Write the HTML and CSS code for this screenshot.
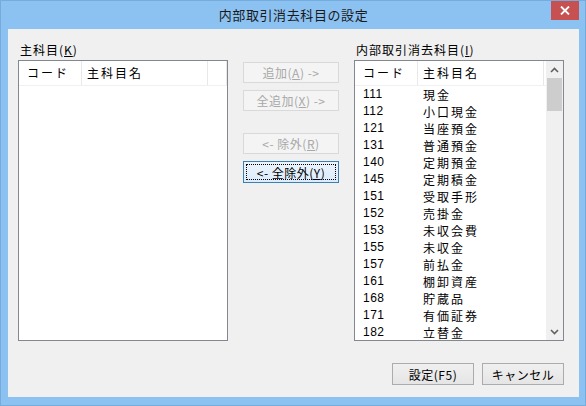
FILE: index.html
```html
<!DOCTYPE html>
<html lang="ja">
<head>
    <meta charset="UTF-8">
    <title>内部取引消去科目の設定</title>
    <link rel="stylesheet" href="styles.css">
</head>
<body>
    <div class="window">
        <div class="titlebar">
            <span></span>
            <div class="title">内部取引消去科目の設定</div>
            <div class="close">
                <svg width="10" height="9" viewBox="0 0 10 9"><path d="M1 0.5 L9 8.5 M9 0.5 L1 8.5" stroke="#fff" stroke-width="1.8"/></svg>
            </div>
        </div>

        <div class="client">
            <div class="panes">
                <div class="pane">
                    <div class="label">主科目(<u>K</u>)</div>
                    <div class="list">
                        <div class="head">
                            <div class="col-code">コード</div>
                            <div class="col-name">主科目名</div>
                            <div class="col-rest"></div>
                        </div>
                    </div>
                </div>

                <div class="moves">
                    <button class="btn disabled">追加(<u>A</u>) -&gt;</button>
                    <button class="btn disabled">全追加(<u>X</u>) -&gt;</button>
                    <button class="btn disabled gap">&lt;- 除外(<u>R</u>)</button>
                    <button class="btn focused"><span class="focus-ring">&lt;- 全除外(<u>Y</u>)</span></button>
                </div>

                <div class="pane">
                    <div class="label">内部取引消去科目(<u>I</u>)</div>
                    <div class="list with-scroll">
                        <div class="list-body">
                            <div class="head">
                                <div class="col-code">コード</div>
                                <div class="col-name">主科目名</div>
                            </div>
                            <div class="rows" id="rows"></div>
                        </div>
                        <div class="scrollbar">
                            <div class="arrow">
                                <svg width="9" height="6" viewBox="0 0 9 6"><path d="M1 5 L4.5 1.5 L8 5" fill="none" stroke="#606060" stroke-width="1.6"/></svg>
                            </div>
                            <div class="track"><div class="thumb"></div></div>
                            <div class="arrow">
                                <svg width="9" height="6" viewBox="0 0 9 6"><path d="M1 1 L4.5 4.5 L8 1" fill="none" stroke="#606060" stroke-width="1.6"/></svg>
                            </div>
                        </div>
                    </div>
                </div>
            </div>

            <div class="footer">
                <button class="btn">設定(F5)</button>
                <button class="btn">キャンセル</button>
            </div>
        </div>
    </div>

    <script>
        const items = [
            ["111", "現金"], ["112", "小口現金"], ["121", "当座預金"], ["131", "普通預金"],
            ["140", "定期預金"], ["145", "定期積金"], ["151", "受取手形"], ["152", "売掛金"],
            ["153", "未収会費"], ["155", "未収金"], ["157", "前払金"], ["161", "棚卸資産"],
            ["168", "貯蔵品"], ["171", "有価証券"], ["182", "立替金"]
        ];
        const rows = document.getElementById("rows");
        items.forEach(([code, name]) => {
            const row = document.createElement("div");
            row.className = "row";
            row.innerHTML = `<div class="col-code num">${code}</div><div class="col-name">${name}</div>`;
            rows.appendChild(row);
        });
    </script>
</body>
</html>
```

FILE: styles.css
```css
* {
    margin: 0;
    padding: 0;
    box-sizing: border-box;
}

body {
    width: 586px;
    height: 406px;
    overflow: hidden;
    font-family: "Noto Sans CJK JP", sans-serif;
    font-size: 12px;
    color: #000;
}

.window {
    width: 586px;
    height: 406px;
    background: #8cc2f2;
    border: 1px solid #76acdc;
    display: flex;
    flex-direction: column;
    padding: 0 6px 8px 7px;
}

.titlebar {
    height: 28px;
    display: grid;
    grid-template-columns: 1fr auto 1fr;
    align-items: start;
}

.title {
    font-size: 13px;
    letter-spacing: 0.6px;
    line-height: 16px;
    padding-top: 6px;
    color: #1a1a1a;
}

.close {
    justify-self: end;
    width: 28px;
    height: 19px;
    background: #c75050;
    display: flex;
    align-items: center;
    justify-content: center;
}

.client {
    flex: 1;
    background: #f0f0f0;
    padding: 13px 15px 12px 10px;
    display: flex;
    flex-direction: column;
}

.panes {
    display: flex;
}

.pane {
    width: 210px;
    display: flex;
    flex-direction: column;
}

.label {
    height: 16px;
    line-height: 16px;
    margin-bottom: 2px;
    padding-left: 2px;
    letter-spacing: 1px;
}

.list {
    height: 281px;
    background: #fff;
    border: 1px solid #828790;
    overflow: hidden;
}

.with-scroll {
    display: flex;
}

.list-body {
    flex: 1;
    overflow: hidden;
}

.head {
    display: flex;
    height: 25px;
    border-bottom: 1px solid #f0f0f0;
    line-height: 24px;
    letter-spacing: 2px;
}

.head > div {
    border-right: 1px solid #e8e8e8;
}

.col-code {
    width: 63px;
    padding-left: 8px;
    flex-shrink: 0;
}

.col-name {
    width: 126px;
    padding-left: 5px;
    flex-shrink: 0;
}

.col-rest {
    flex: 1;
}

.row {
    display: flex;
    height: 17px;
    line-height: 17px;
    letter-spacing: 2px;
}

.num {
    font-family: "Liberation Sans", sans-serif;
    letter-spacing: 0.5px;
}

.scrollbar {
    width: 17px;
    background: #f0f0f0;
    display: flex;
    flex-direction: column;
}

.arrow {
    height: 17px;
    display: flex;
    align-items: center;
    justify-content: center;
}

.track {
    flex: 1;
    padding: 0 1px;
}

.thumb {
    height: 33px;
    background: #cdcdcd;
}

.moves {
    width: 96px;
    margin: 20px 15px 0;
    display: flex;
    flex-direction: column;
    gap: 7px;
}

.btn {
    height: 21px;
    font-family: "Noto Sans CJK JP", sans-serif;
    font-size: 12px;
    letter-spacing: 0.5px;
    color: #000;
    background: linear-gradient(#f0f0f0, #e5e5e5);
    border: 1px solid #acacac;
    display: flex;
    align-items: center;
    justify-content: center;
}

.btn.disabled {
    color: #a8a8a8;
    background: #f4f4f4;
    border-color: #d9d9d9;
}

.btn.gap {
    margin-top: 15px;
}

.btn.focused {
    height: 22px;
    border-color: #3c7fb1;
    background: linear-gradient(#ecf4fc, #dcecfc);
    padding: 2px;
}

.focus-ring {
    width: 100%;
    height: 100%;
    border: 1px dotted #000;
    display: flex;
    align-items: center;
    justify-content: center;
}

.footer {
    margin-top: 22px;
    display: flex;
    justify-content: flex-end;
    gap: 8px;
}

.footer .btn {
    width: 82px;
    height: 22px;
}
```
